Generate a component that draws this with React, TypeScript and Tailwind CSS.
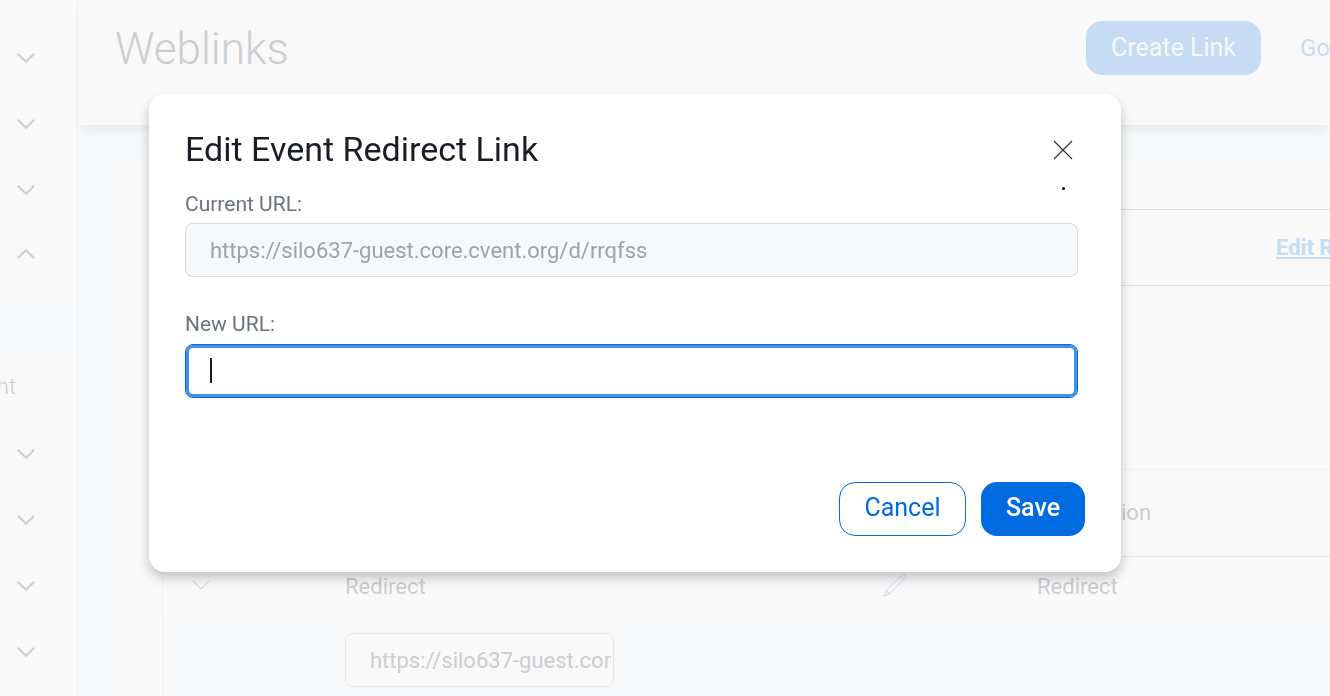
type IconProps = { className?: string };

function Chevron({ className }: IconProps) {
  return (
    <svg viewBox="0 0 18 10" width="18" height="10" fill="none" stroke="currentColor" className={className} aria-hidden="true">
      <path d="M.8.8 9 8.8 17.2.8" />
    </svg>
  );
}

function Pencil() {
  return (
    <svg viewBox="0 0 24 24" width="24" height="24" fill="none" stroke="currentColor" strokeWidth="1" strokeLinejoin="round" aria-hidden="true">
      <path d="M.8 23.2 3 17.8 19.2 1.6a2.2 2.2 0 0 1 3.2 3.2L6.2 21Z" />
      <path d="M3 17.8 6.2 21M17.4 3.4l3.2 3.2" />
    </svg>
  );
}

const navRows = ["down", "down", "down", "up", "selected", "text", "down", "down", "down", "down"];

function Sidebar() {
  return (
    <nav aria-label="Sections" className="w-[78px] shrink-0 border-r border-[#f0f1f2] pt-[25px]">
      <ul>
        {navRows.map((kind, i) => (
          <li key={i} className={kind === "selected" ? "h-[66px] border-b-2 border-[#f9f9f9] bg-[#f6f8fa]" : "h-[66px]"}>
            {kind === "text" && (
              <a href="#" className="flex h-full w-4 items-center justify-end overflow-hidden pb-1 text-[22px] font-light">
                nt
              </a>
            )}
            {(kind === "down" || kind === "up") && (
              <button
                type="button"
                aria-label="Toggle section"
                className={kind === "up" ? "flex h-full w-full items-center pb-1 pl-[17px]" : "flex h-full w-full items-center pl-[17px]"}
              >
                <Chevron className={kind === "up" ? "rotate-180 stroke-2" : "stroke-2"} />
              </button>
            )}
          </li>
        ))}
      </ul>
    </nav>
  );
}

function Header() {
  return (
    <header className="flex h-[125px] shrink-0 items-start justify-between bg-[#f9f9f9] pt-[21px] pl-[37px] shadow-[0_8px_12px_-4px_rgba(0,0,0,0.07)]">
      <h1 className="text-[44px] leading-[56px] font-light">Weblinks</h1>
      <div className="flex w-[244px] shrink-0 gap-[39px] overflow-hidden whitespace-nowrap">
        <button type="button" className="h-[54px] w-[175px] shrink-0 rounded-2xl bg-[#c6dcf4] text-[25px] text-[#f9f9f9]">
          Create Link
        </button>
        <a href="#" className="text-2xl leading-[54px] text-[#c6dcf4]">Go</a>
      </div>
    </header>
  );
}

function LinksTable() {
  return (
    <table className="w-full table-fixed border-collapse text-left text-[22px]">
      <colgroup>
        <col className="w-[182px]" />
        <col className="w-[538px]" />
        <col className="w-[154px]" />
        <col />
      </colgroup>
      <thead>
        <tr className="h-[86px] border-b border-[#e3e4e5]">
          <td />
          <td />
          <td />
          <th className="pl-[84px] font-normal">ion</th>
        </tr>
      </thead>
      <tbody>
        <tr className="h-[61px]">
          <td className="pb-1 pl-[29px]">
            <button type="button" aria-label="Collapse row" className="block">
              <Chevron />
            </button>
          </td>
          <td>Redirect</td>
          <td className="pb-1">
            <button type="button" aria-label="Edit" className="block text-[#c6dcf4]">
              <Pencil />
            </button>
          </td>
          <td>Redirect</td>
        </tr>
        <tr className="h-[100px] bg-[#f6f8fa]">
          <td />
          <td colSpan={3} className="pt-4 align-top">
            <input
              aria-label="Redirect URL"
              readOnly
              value="https://silo637-guest.cor"
              className="block h-[54px] w-[269px] rounded-lg border border-[#e6e7e9] bg-[#f9f9f9] pl-6 text-[22px]"
            />
          </td>
        </tr>
      </tbody>
    </table>
  );
}

function EditDialog() {
  return (
    <div className="fixed inset-0 pt-[94px] pr-[209px] pl-[149px]">
      <section
        role="dialog"
        aria-labelledby="dialog-title"
        className="rounded-2xl bg-white px-9 pt-9 pb-9 shadow-[0_6px_12px_rgba(0,0,0,0.22)]"
      >
        <div className="flex h-12 items-start justify-between">
          <h2 id="dialog-title" className="text-[34px] leading-[38px] text-[#1a1e24]">Edit Event Redirect Link</h2>
          <div className="mr-3 flex flex-col items-center pt-[10px]">
            <button type="button" aria-label="Close" className="block text-[#2b3036]">
              <svg viewBox="0 0 20 20" width="20" height="20" stroke="currentColor" strokeWidth="1.1" aria-hidden="true">
                <path d="m1 1 18 18M19 1 1 19" />
              </svg>
            </button>
            <span className="mt-[27px] size-[3px] shrink-0 rounded-full bg-black" />
          </div>
        </div>
        <form className="mr-[7px]">
          <label htmlFor="current-url" className="mt-3 block text-[21px] leading-7 text-[#6b737e]">Current URL:</label>
          <input
            id="current-url"
            readOnly
            value="https://silo637-guest.core.cvent.org/d/rrqfss"
            className="mt-[5px] block h-[54px] w-full rounded-lg border border-[#d6dadd] bg-[#f6f8fa] px-6 text-[22px] text-[#9fa3a8]"
          />
          <label htmlFor="new-url" className="mt-[33px] block text-[21px] leading-7 text-[#6b737e]">New URL:</label>
          <div className="relative mt-[6px]">
            <input
              id="new-url"
              className="block h-[54px] w-full rounded-lg border border-[#006ae1] bg-white px-6 text-[22px] text-[#1a1e24] inset-ring-3 inset-ring-[#4091ea] outline-none"
            />
            <span className="pointer-events-none absolute top-[14px] left-[25px] h-[25px] w-0.5 bg-[#1a1e24]" />
          </div>
        </form>
        <div className="mt-[84px] flex justify-end gap-[15px] text-[25px]">
          <button type="button" className="h-[54px] w-[127px] rounded-2xl border border-[#006ae1] pb-0.5 text-[#006ae1]">Cancel</button>
          <button type="button" className="h-[54px] w-[104px] rounded-2xl bg-[#006ae1] pb-0.5 font-medium text-white">Save</button>
        </div>
      </section>
    </div>
  );
}

export default function App() {
  return (
    <div className="flex h-screen overflow-hidden bg-[#f9f9f9] font-[Roboto,sans-serif] text-[#cccdd1]">
      <Sidebar />
      <div className="flex min-w-0 flex-1 flex-col bg-[#f6f8fa]">
        <Header />
        <main className="mt-9 ml-9 flex-1 rounded-tl-2xl bg-[#f9f9f9] pl-12">
          <div className="mt-12 flex h-[77px] items-center justify-between border-y border-[#d3e2f2]">
            <span className="w-[960px] text-right text-[21px]">.</span>
            <a href="#" className="w-[54px] overflow-hidden text-[22px] font-bold whitespace-nowrap text-[#c6dcf4] underline decoration-2 underline-offset-2">
              Edit R
            </a>
          </div>
          <div className="mt-[183px] border-t border-l border-[#f0f1f2]">
            <LinksTable />
          </div>
        </main>
      </div>
      <EditDialog />
    </div>
  );
}
